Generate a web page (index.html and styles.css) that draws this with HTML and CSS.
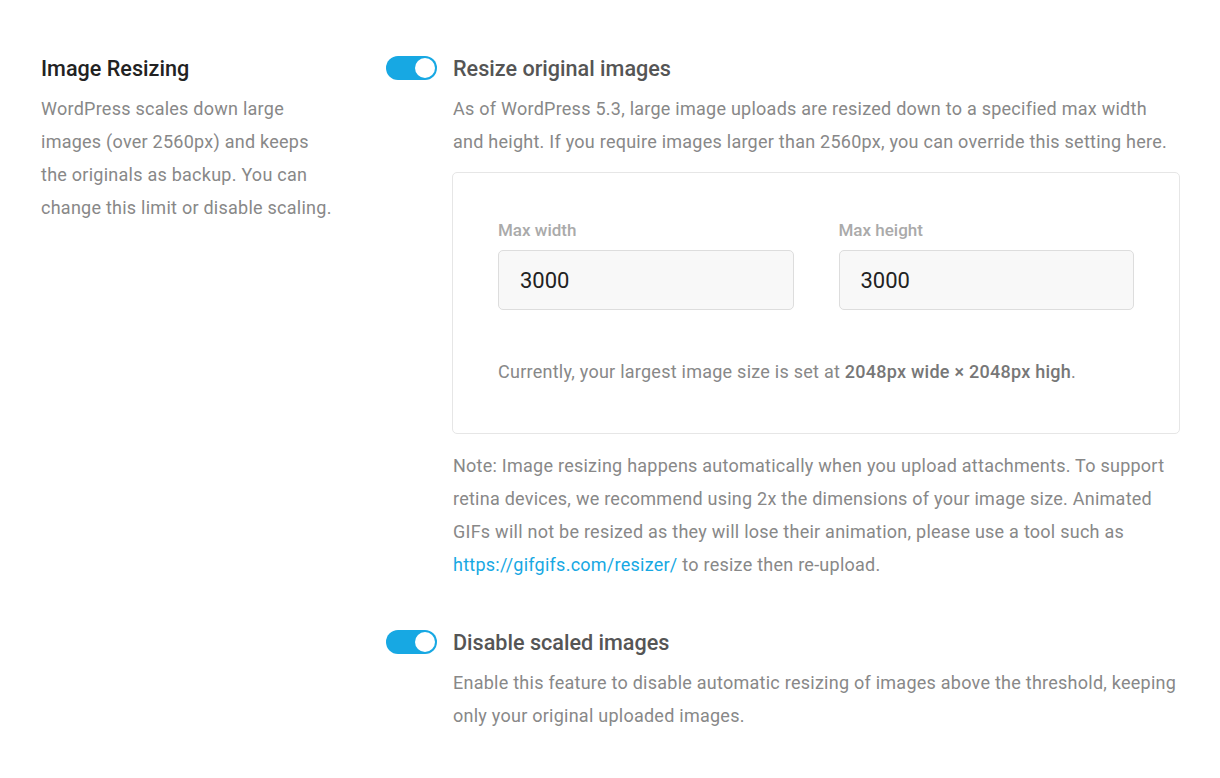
FILE: index.html
```html
<!DOCTYPE html>
<html lang="en">
<head>
    <meta charset="UTF-8">
    <meta name="viewport" content="width=device-width, initial-scale=1.0">
    <title>Image Resizing</title>
    <link rel="stylesheet" href="styles.css">
</head>
<body>
    <div class="settings-row">
        <div class="settings-label">
            <h3>Image Resizing</h3>
            <p>WordPress scales down large images (over 2560px) and keeps the originals as backup. You can change this limit or disable scaling.</p>
        </div>
        <div class="settings-options">
            <div class="option">
                <label class="toggle">
                    <input type="checkbox" checked>
                    <span class="slider"></span>
                </label>
                <div class="option-body">
                    <h4>Resize original images</h4>
                    <p>As of WordPress 5.3, large image uploads are resized down to a specified max width and height. If you require images larger than 2560px, you can override this setting here.</p>
                    <div class="resize-box">
                        <div class="resize-fields">
                            <div class="field">
                                <label for="max-width">Max width</label>
                                <input id="max-width" type="text" value="3000">
                            </div>
                            <div class="field">
                                <label for="max-height">Max height</label>
                                <input id="max-height" type="text" value="3000">
                            </div>
                        </div>
                        <p class="current-size">Currently, your largest image size is set at <strong>2048px wide × 2048px high</strong>.</p>
                    </div>
                    <p class="note">Note: Image resizing happens automatically when you upload attachments. To support retina devices, we recommend using 2x the dimensions of your image size. Animated GIFs will not be resized as they will lose their animation, please use a tool such as <a href="#">https://gifgifs.com/resizer/</a> to resize then re-upload.</p>
                </div>
            </div>
            <div class="option">
                <label class="toggle">
                    <input type="checkbox" checked>
                    <span class="slider"></span>
                </label>
                <div class="option-body">
                    <h4>Disable scaled images</h4>
                    <p>Enable this feature to disable automatic resizing of images above the threshold, keeping only your original uploaded images.</p>
                </div>
            </div>
        </div>
    </div>
</body>
</html>
```

FILE: styles.css
```css
body {
    margin: 0;
    background-color: #fff;
    font-family: Roboto, "Liberation Sans", sans-serif;
    color: #888;
}
.settings-row {
    display: flex;
    padding: 54px 40px 0 41px;
}
.settings-label {
    width: 345px;
    flex-shrink: 0;
}
.settings-label h3 {
    margin: 0 0 8px;
    font-size: 21.6px;
    line-height: 30px;
    font-weight: 500;
    color: #222;
}
.settings-label p {
    margin: 0;
    width: 295px;
    font-size: 18px;
    line-height: 33px;
    letter-spacing: 0.25px;
}
.settings-options {
    flex: 1;
}
.option {
    display: flex;
    gap: 16px;
    margin-bottom: 47px;
}
.toggle {
    position: relative;
    display: block;
    width: 51px;
    height: 24px;
    margin-top: 2px;
    flex-shrink: 0;
}
.toggle input {
    display: none;
}
.slider {
    position: absolute;
    top: 0;
    left: 0;
    right: 0;
    bottom: 0;
    border-radius: 12px;
    background-color: #17a8e3;
}
.slider::after {
    content: "";
    position: absolute;
    top: 2px;
    right: 2px;
    width: 20px;
    height: 20px;
    border-radius: 50%;
    background-color: #fff;
}
.option-body {
    flex: 1;
}
.option-body h4 {
    margin: 0 0 8px;
    font-size: 21.6px;
    line-height: 30px;
    font-weight: 500;
    color: #555;
}
.option-body p {
    margin: 0;
    font-size: 18px;
    line-height: 33px;
    letter-spacing: 0.25px;
}
.resize-box {
    margin: 14px 0 15px -1px;
    padding: 46px 45px 45px 45px;
    border: 1px solid #e6e6e6;
    border-radius: 5px;
}
.resize-fields {
    display: grid;
    grid-template-columns: 1fr 1fr;
    gap: 45px;
}
.field label {
    display: block;
    margin-bottom: 9px;
    font-size: 17px;
    line-height: 22px;
    font-weight: 500;
    color: #aaa;
}
.field input {
    box-sizing: border-box;
    width: 100%;
    height: 60px;
    padding: 0 21px;
    border: 1px solid #ddd;
    border-radius: 5px;
    background-color: #f8f8f8;
    font-family: Roboto, "Liberation Sans", sans-serif;
    font-size: 22px;
    color: #222;
}
.option-body .current-size {
    margin-top: 45px;
}
.current-size strong {
    font-weight: 500;
    color: #777;
}
.note a {
    color: #17a8e3;
    text-decoration: none;
}
```
